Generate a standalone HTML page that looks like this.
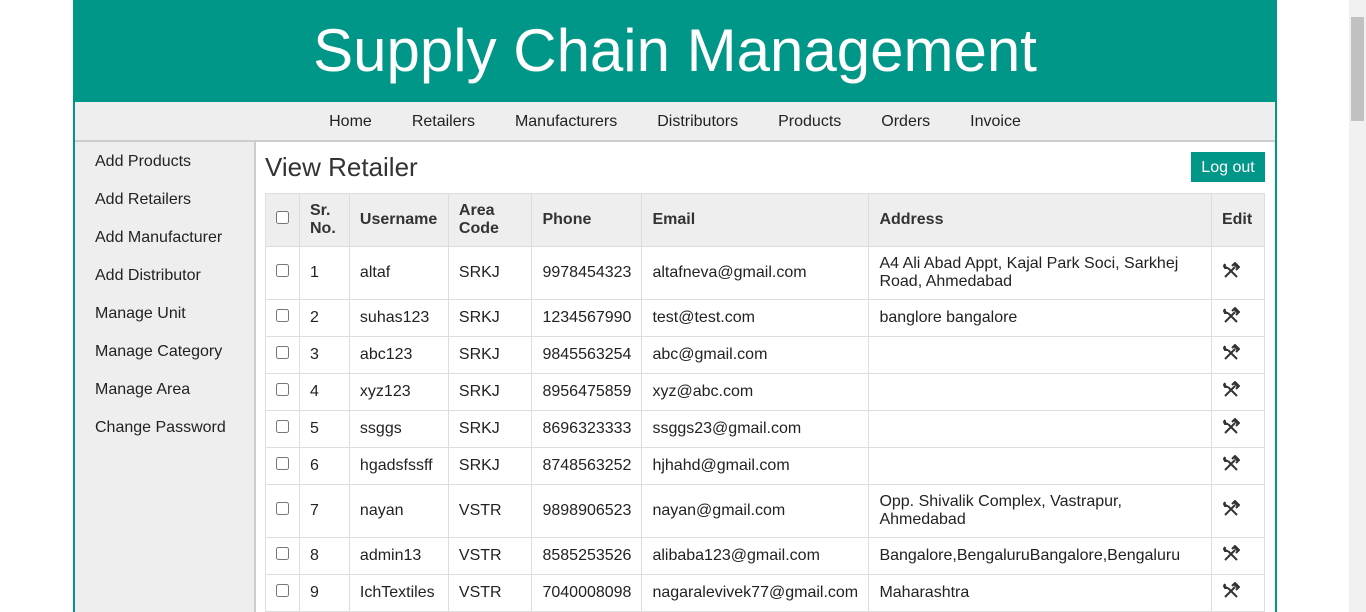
<!DOCTYPE html>
<html><head><style>
*{box-sizing:border-box}
body{margin:0;width:1366px;height:612px;overflow:hidden;background:#fff;font-family:"Liberation Sans",Arial,sans-serif;color:#222;position:relative}
.sb{position:absolute;right:0;top:0;width:17px;height:612px;background:#f1f1f1}
.sb div{position:absolute;left:2px;top:17px;width:13px;height:104px;background:#c1c1c1}
.wrap{position:absolute;left:73px;top:0;width:1204px;height:612px;border-left:2px solid #009688;border-right:2px solid #009688}
.hdr{height:102px;background:#009688;color:#fff;text-align:center;font-size:60px;line-height:102px}
.nav{height:40px;background:#eee;border-bottom:2px solid #ccc;text-align:center;font-size:16px;line-height:40px}
.nav span{margin:0 20px}
.side{position:absolute;left:0;top:142px;width:181px;height:470px;background:#eee;border-right:2px solid #ccc;padding-top:1px}
.side div{font-size:16px;height:38px;line-height:38px;padding-left:20px}
h1{position:absolute;left:190px;top:152px;margin:0;font-weight:normal;font-size:26px;line-height:30px;color:#333}
.btn{position:absolute;left:1116px;top:152px;width:74px;height:30px;background:#009688;color:#fff;font-size:16px;line-height:30px;padding-top:1px;text-align:center}
table{position:absolute;left:190px;top:193px;width:1000px;border-collapse:collapse;font-size:16px}
td,th{border:1px solid #ddd;padding:0 10px;text-align:left;vertical-align:middle;line-height:18px}
th{background:#eee;height:53px;color:#333}
td{height:37px}
tr.t td{height:53px}
input{margin:0;width:13px;height:13px}
</style></head><body>
<div class="wrap">
<div class="hdr">Supply Chain Management</div>
<div class="nav"><span>Home</span><span>Retailers</span><span>Manufacturers</span><span>Distributors</span><span>Products</span><span>Orders</span><span>Invoice</span></div>
<div class="side"><div>Add Products</div><div>Add Retailers</div><div>Add Manufacturer</div><div>Add Distributor</div><div>Manage Unit</div><div>Manage Category</div><div>Manage Area</div><div>Change Password</div></div>
<h1>View Retailer</h1>
<div class="btn">Log out</div>
<table>
<colgroup><col style="width:34px"><col style="width:50px"><col style="width:99px"><col style="width:84px"><col style="width:110px"><col style="width:227px"><col style="width:343px"><col style="width:53px"></colgroup>
<tr><th><input type="checkbox"></th><th>Sr.<br>No.</th><th>Username</th><th>Area<br>Code</th><th>Phone</th><th>Email</th><th>Address</th><th>Edit</th></tr>
<tr class="t"><td><input type="checkbox"></td><td>1</td><td>altaf</td><td>SRKJ</td><td>9978454323</td><td>altafneva@gmail.com</td><td>A4 Ali Abad Appt, Kajal Park Soci, Sarkhej Road, Ahmedabad</td><td>I</td></tr>
<tr><td><input type="checkbox"></td><td>2</td><td>suhas123</td><td>SRKJ</td><td>1234567990</td><td>test@test.com</td><td>banglore bangalore</td><td>I</td></tr>
<tr><td><input type="checkbox"></td><td>3</td><td>abc123</td><td>SRKJ</td><td>9845563254</td><td>abc@gmail.com</td><td></td><td>I</td></tr>
<tr><td><input type="checkbox"></td><td>4</td><td>xyz123</td><td>SRKJ</td><td>8956475859</td><td>xyz@abc.com</td><td></td><td>I</td></tr>
<tr><td><input type="checkbox"></td><td>5</td><td>ssggs</td><td>SRKJ</td><td>8696323333</td><td>ssggs23@gmail.com</td><td></td><td>I</td></tr>
<tr><td><input type="checkbox"></td><td>6</td><td>hgadsfssff</td><td>SRKJ</td><td>8748563252</td><td>hjhahd@gmail.com</td><td></td><td>I</td></tr>
<tr class="t"><td><input type="checkbox"></td><td>7</td><td>nayan</td><td>VSTR</td><td>9898906523</td><td>nayan@gmail.com</td><td>Opp. Shivalik Complex, Vastrapur, Ahmedabad</td><td>I</td></tr>
<tr><td><input type="checkbox"></td><td>8</td><td>admin13</td><td>VSTR</td><td>8585253526</td><td>alibaba123@gmail.com</td><td>Bangalore,BengaluruBangalore,Bengaluru</td><td>I</td></tr>
<tr><td><input type="checkbox"></td><td>9</td><td>IchTextiles</td><td>VSTR</td><td>7040008098</td><td>nagaralevivek77@gmail.com</td><td>Maharashtra</td><td>I</td></tr>
</table>
</div>
<div class="sb"><div></div></div>
<script>
document.querySelectorAll('td:last-child').forEach(function(td){td.innerHTML='<svg width="18" height="18" viewBox="0 0 18 18"><path d="M3 15L13 5M12 2l4 4M10 4l3-3 4 4-3 3" stroke="#333" stroke-width="2" fill="none"/><path d="M15 15L6 6M3 2a3 3 0 0 0 3 4l-3 0-1-2z" stroke="#333" stroke-width="2" fill="none"/></svg>';});
</script>
</body></html>
